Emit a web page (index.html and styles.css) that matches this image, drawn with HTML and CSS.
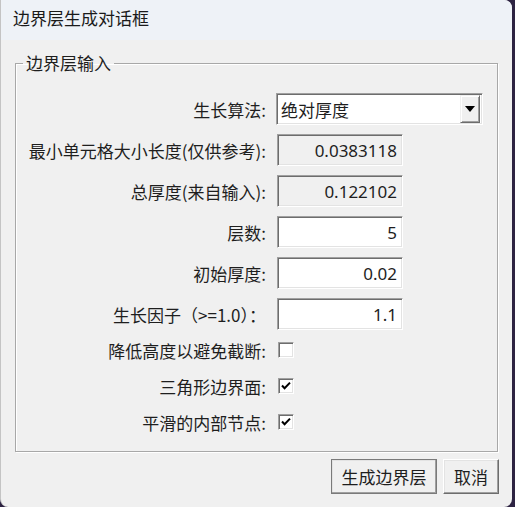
FILE: index.html
```html
<!DOCTYPE html>
<html lang="zh-CN">
<head>
  <meta charset="UTF-8">
  <title>边界层生成对话框</title>
  <link rel="stylesheet" href="styles.css">
</head>
<body>
  <div class="window">
    <div class="titlebar">边界层生成对话框</div>

    <div class="content">
      <fieldset class="group">
        <legend>边界层输入</legend>

        <div class="form-grid">
          <label>生长算法:</label>
          <div class="combo">
            <span class="combo-text">绝对厚度</span>
            <span class="combo-btn"><span class="arrow"></span></span>
          </div>

          <label>最小单元格大小长度(仅供参考):</label>
          <div class="field readonly">0.0383118</div>

          <label>总厚度(来自输入):</label>
          <div class="field readonly">0.122102</div>

          <label>层数:</label>
          <div class="field">5</div>

          <label>初始厚度:</label>
          <div class="field">0.02</div>

          <label>生长因子（&gt;=1.0）：</label>
          <div class="field">1.1</div>
        </div>

        <div class="check-grid">
          <label>降低高度以避免截断:</label>
          <span class="checkbox"></span>

          <label>三角形边界面:</label>
          <span class="checkbox">
            <svg viewBox="0 0 12 12" width="12" height="12"><path d="M2 5.5 L4.6 8.3 L10 2.6" fill="none" stroke="#000" stroke-width="2"/></svg>
          </span>

          <label>平滑的内部节点:</label>
          <span class="checkbox">
            <svg viewBox="0 0 12 12" width="12" height="12"><path d="M2 5.5 L4.6 8.3 L10 2.6" fill="none" stroke="#000" stroke-width="2"/></svg>
          </span>
        </div>
      </fieldset>

      <div class="buttons">
        <button class="btn default">生成边界层</button>
        <button class="btn cancel">取消</button>
      </div>
    </div>
  </div>
</body>
</html>
```

FILE: styles.css
```css
body {
    margin: 0;
    background-color: #2d2342;
    font-family: "Noto Sans", "Noto Sans CJK SC", sans-serif;
    font-size: 17px;
    color: #1e1e1e;
}

.window {
    width: 511px;
    height: 507px;
    background-color: #f0f0f0;
    border-left: 1px solid #c4c4c4;
    border-radius: 0 8px 8px 8px;
    overflow: hidden;
}

.titlebar {
    height: 40px;
    line-height: 36px;
    padding-left: 12px;
    background-color: #eef2f7;
    font-family: "Noto Sans CJK SC", sans-serif;
    font-size: 17px;
    color: #1a1a1a;
}

.content {
    padding: 13px 14px 0 14px;
}

.group {
    margin: 0;
    padding: 0 0 16px 0;
    border: 1px solid #a8a8a8;
    box-shadow: 1px 1px 0 #fff, inset 1px 1px 0 #fff;
}

.group legend {
    margin-left: 7px;
    padding: 0 3px;
    line-height: 20px;
    font-family: "Noto Sans CJK SC", sans-serif;
}

.form-grid {
    display: grid;
    grid-template-columns: 250px auto;
    grid-auto-rows: 32px;
    column-gap: 10px;
    row-gap: 9px;
    margin-top: 20px;
}

.form-grid label, .check-grid label {
    display: flex;
    align-items: center;
    justify-content: flex-end;
    font-family: "Noto Sans CJK SC", sans-serif;
    white-space: nowrap;
}

.field {
    box-sizing: border-box;
    width: 126px;
    height: 32px;
    margin-left: 1px;
    padding-right: 5px;
    display: flex;
    align-items: center;
    justify-content: flex-end;
    background-color: #fff;
    border: 1px solid;
    border-color: #a0a0a0 #fff #fff #a0a0a0;
    box-shadow: inset 1px 1px 0 #6d6d6d, inset -1px -1px 0 #e3e3e3;
}

.field.readonly {
    background-color: #f0f0f0;
}

.combo {
    box-sizing: border-box;
    width: 207px;
    height: 32px;
    display: flex;
    align-items: center;
    background-color: #fff;
    border: 1px solid;
    border-color: #a0a0a0 #fff #fff #a0a0a0;
    box-shadow: inset 1px 1px 0 #6d6d6d, inset -1px -1px 0 #e3e3e3;
}

.combo-text {
    flex: 1;
    padding-left: 4px;
    font-family: "Noto Sans CJK SC", sans-serif;
}

.combo-btn {
    box-sizing: border-box;
    width: 20px;
    height: 28px;
    margin-right: 2px;
    display: flex;
    align-items: center;
    justify-content: center;
    background-color: #f0f0f0;
    border: 1px solid;
    border-color: #f0f0f0 #6d6d6d #6d6d6d #f0f0f0;
    box-shadow: inset 1px 1px 0 #fff, inset -1px -1px 0 #a0a0a0;
}

.arrow {
    width: 0;
    height: 0;
    border-left: 5px solid transparent;
    border-right: 5px solid transparent;
    border-top: 6px solid #000;
}

.check-grid {
    display: grid;
    grid-template-columns: 250px auto;
    grid-auto-rows: 26px;
    column-gap: 12px;
    row-gap: 10px;
    margin-top: 7px;
}

.checkbox {
    box-sizing: border-box;
    width: 16px;
    height: 16px;
    align-self: center;
    display: flex;
    align-items: center;
    justify-content: center;
    background-color: #fff;
    border: 1px solid;
    border-color: #a0a0a0 #fff #fff #a0a0a0;
    box-shadow: inset 1px 1px 0 #6d6d6d, inset -1px -1px 0 #e3e3e3;
}

.buttons {
    display: flex;
    justify-content: flex-end;
    gap: 6px;
    margin-top: 7px;
    margin-right: -1px;
}

.btn {
    box-sizing: border-box;
    height: 35px;
    padding: 0;
    font-family: "Noto Sans CJK SC", sans-serif;
    font-size: 17px;
    color: #1e1e1e;
    background-color: #f0f0f0;
    border: 1px solid;
    border-color: #fff #6d6d6d #6d6d6d #fff;
    box-shadow: inset -1px -1px 0 #a0a0a0, inset 1px 1px 0 #e3e3e3;
}

.btn.default {
    width: 106px;
    outline: 1px solid #7a7a7a;
    outline-offset: -1px;
}

.btn.cancel {
    width: 56px;
}
```
